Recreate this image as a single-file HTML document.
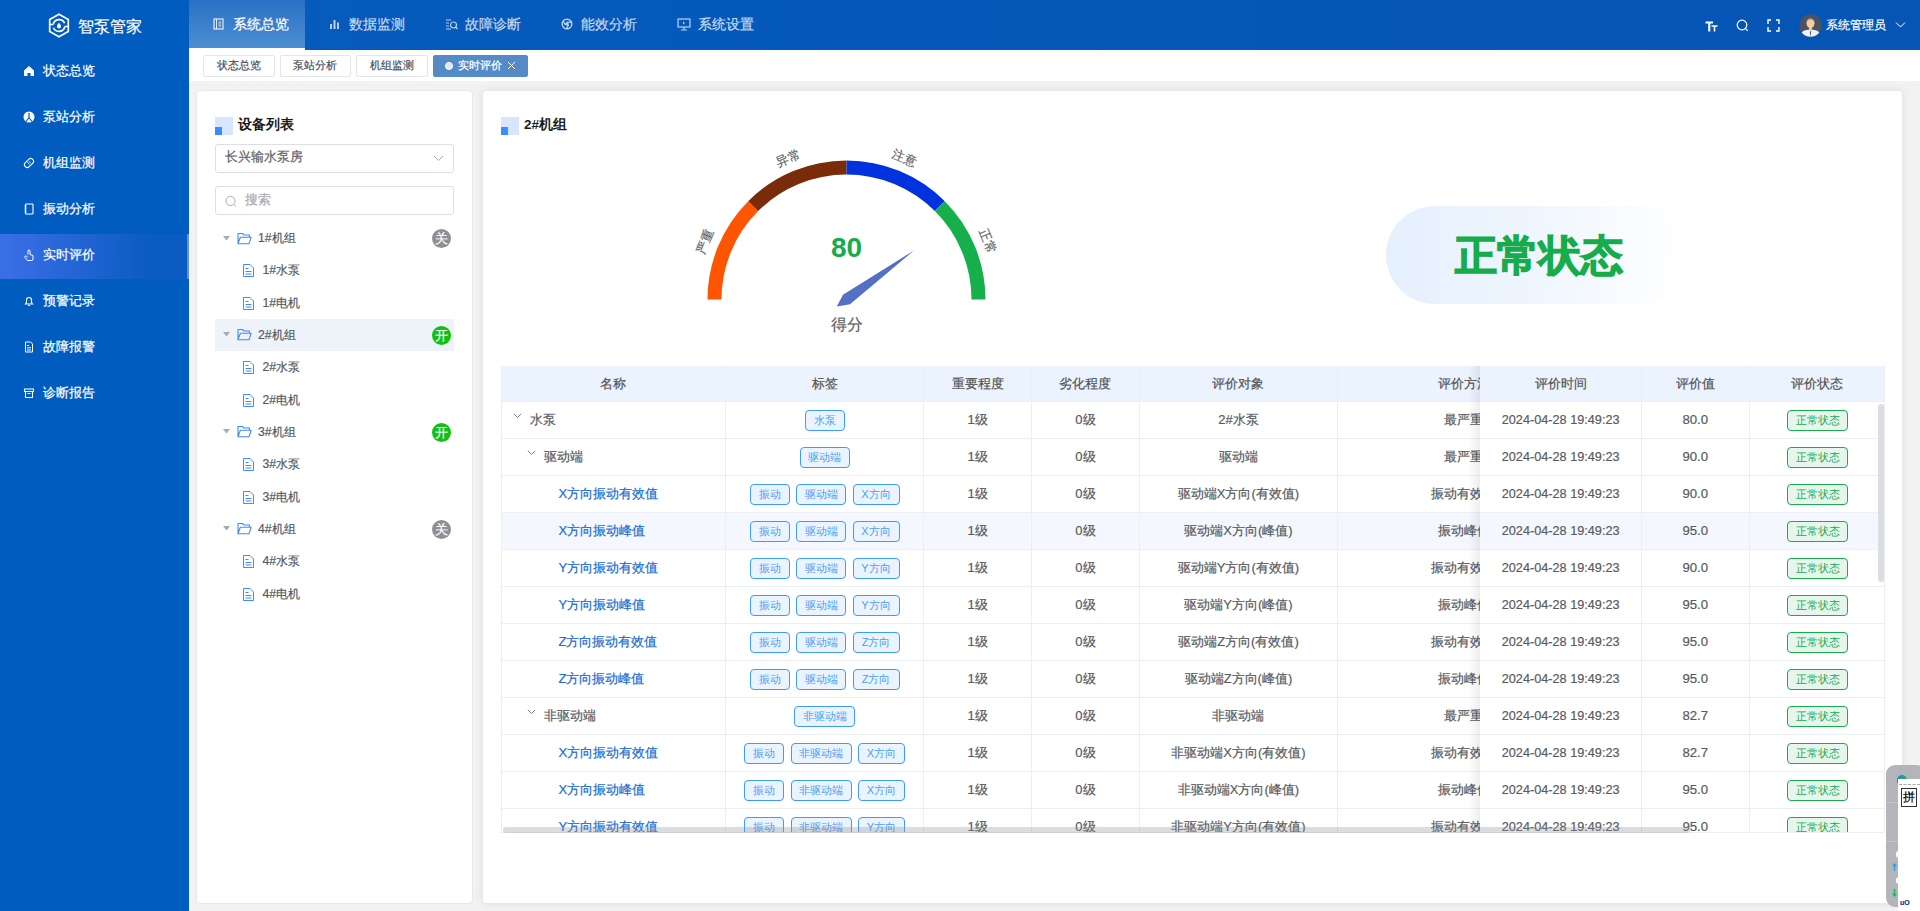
<!DOCTYPE html>
<html><head><meta charset="utf-8">
<style>
*{margin:0;padding:0;box-sizing:border-box}
html,body{width:1920px;height:911px;overflow:hidden;font-family:"Liberation Sans",sans-serif;background:#f4f5f7;-webkit-text-stroke-width:0.2px}
.abs{position:absolute}
#side{position:absolute;left:0;top:0;width:189px;height:911px;background:#005cbf}
#hdr{position:absolute;left:189px;top:0;width:1731px;height:50px;background:linear-gradient(90deg,#065bbd,#0555b4)}
.logo-t{position:absolute;left:77.5px;top:14.5px;font-size:16px;color:#fff;line-height:24px;letter-spacing:0}
.mi{position:absolute;left:0;width:189px;height:46px}
.mi .t{position:absolute;left:43px;top:0;line-height:46px;font-size:13px;color:#fff}
.mi svg{position:absolute;left:23px;top:17px}
.nav{position:absolute;top:0;height:48px;width:116px}
.nav .t{position:absolute;left:44px;top:1px;line-height:48px;font-size:13.5px;color:rgba(255,255,255,.72)}
.nav svg{position:absolute;left:24px;top:18px}
#tabs{position:absolute;left:189px;top:50px;width:1731px;height:31px;background:#fff}
.tag{position:absolute;top:54.5px;height:22px;border:1px solid #e4e6ee;border-radius:2px;background:#fff;font-size:11px;color:#495060;line-height:19px;text-align:center}
.card{position:absolute;background:#fff;border:1px solid #e6e8ef;border-radius:4px}
</style></head><body>
<div id="side">
  <svg class="abs" style="left:48px;top:13px" width="22" height="25" viewBox="0 0 22 25">
    <path d="M11 1.2 L20.3 6.6 V18.4 L11 23.8 L1.7 18.4 V6.6 Z" fill="none" stroke="#fff" stroke-width="1.7"/>
    <path d="M5.2 11.5 A6 6 0 0 1 16.6 10.2" fill="none" stroke="#fff" stroke-width="1.6"/>
    <path d="M16.8 13.5 A6 6 0 0 1 5.4 14.8" fill="none" stroke="#fff" stroke-width="1.6"/>
    <path d="M1.7 11.5 H5.2 M16.8 13.5 H20.3" stroke="#fff" stroke-width="1.6"/>
    <path d="M11 9.8 C12.5 11.6 13 12.4 13 13.4 A2 2 0 0 1 9 13.4 C9 12.4 9.5 11.6 11 9.8Z" fill="#fff"/>
  </svg>
  <div class="logo-t">智泵管家</div>
  <div class="mi" style="top:48px"><svg width="12" height="12" viewBox="0 0 12 12"><path d="M6 1 L11 5.5 V11 H7.5 V8 H4.5 V11 H1 V5.5Z" fill="#fff"/></svg><div class="t">状态总览</div></div>
  <div class="mi" style="top:94px"><svg width="12" height="12" viewBox="0 0 12 12"><circle cx="6" cy="6" r="5.5" fill="#fff"/><path d="M6 2 V6.5 L3 10.5 M6 6.5 L9 10.5" stroke="#005cbf" stroke-width="1.2" fill="none"/></svg><div class="t">泵站分析</div></div>
  <div class="mi" style="top:140px"><svg width="12" height="12" viewBox="0 0 12 12"><rect x="3.2" y="0.8" width="5.6" height="10.4" rx="2.8" transform="rotate(45 6 6)" fill="none" stroke="#fff" stroke-width="1.1"/><path d="M4.5 5.5 L6.5 7.5 M5.8 4.2 L7.8 6.2" stroke="#fff" stroke-width="1"/></svg><div class="t">机组监测</div></div>
  <div class="mi" style="top:186px"><svg width="12" height="12" viewBox="0 0 12 12"><rect x="2.5" y="1" width="7.5" height="10" rx="0.8" fill="none" stroke="#fff" stroke-width="1.1"/><path d="M1.5 3 H3.5 M1.5 5 H3.5 M1.5 7 H3.5 M1.5 9 H3.5" stroke="#fff" stroke-width="0.9"/></svg><div class="t">振动分析</div></div>
  <div class="abs" style="left:0;top:233.5px;width:187px;height:45.5px;background:linear-gradient(90deg,#3c6fe6,#0a5cc2 80%)"></div><div class="mi" style="top:232px"><svg width="12" height="12" viewBox="0 0 12 12"><path d="M5 5.5 V2 A1 1 0 0 1 7 2 V5.5 L10 6.5 V10 A1.5 1.5 0 0 1 8.5 11.5 H4.5 L2 8.5 A1 1 0 0 1 4 7.5 L5 8.5" fill="none" stroke="#fff" stroke-width="1"/></svg><div class="t">实时评价</div></div>
  <div class="abs" style="left:187px;top:234px;width:1.6px;height:45px;background:rgba(170,195,230,.55)"></div>
  <div class="mi" style="top:278px"><svg width="12" height="12" viewBox="0 0 12 12"><path d="M2.5 9 H9.5 L8.5 7.5 V5 A2.5 2.5 0 0 0 3.5 5 V7.5Z M5 10.5 H7" fill="none" stroke="#fff" stroke-width="1.1"/></svg><div class="t">预警记录</div></div>
  <div class="mi" style="top:324px"><svg width="12" height="12" viewBox="0 0 12 12"><path d="M2.5 1 H7.5 L9.5 3 V11 H2.5Z M4 4.5 H6 M4 6.8 H8 M4 9 H8" fill="none" stroke="#fff" stroke-width="1"/></svg><div class="t">故障报警</div></div>
  <div class="mi" style="top:370px"><svg width="12" height="12" viewBox="0 0 12 12"><path d="M1.5 2 H10.5 V4.5 H1.5Z M2.5 4.5 V10.5 H9.5 V4.5 M4.5 6.5 H7.5" fill="none" stroke="#fff" stroke-width="1.1"/></svg><div class="t">诊断报告</div></div>
</div>

<div id="hdr">
  <div class="nav" style="left:0;background:linear-gradient(180deg,#2a70c4,#4d8ed2)">
    <svg width="11" height="12" viewBox="0 0 11 12"><rect x="1" y="1" width="9" height="10" fill="none" stroke="#fff" stroke-width="1.2" opacity=".85"/><path d="M3.5 1 V11 M5.5 4 H8 M5.5 6 H8 M5.5 8 H8" stroke="#fff" stroke-width="1" opacity=".85"/></svg>
    <div class="t" style="color:#fff">系统总览</div></div>
  <div class="nav" style="left:116px">
    <svg width="11" height="12" viewBox="0 0 11 12"><path d="M2 6 V11 M5.5 2 V11 M9 4.5 V11" stroke="rgba(255,255,255,.72)" stroke-width="2"/></svg>
    <div class="t" style="left:43.5px">数据监测</div></div>
  <div class="nav" style="left:232px">
    <svg width="13" height="12" viewBox="0 0 13 12"><path d="M1 2 H6 M1 5 H4 M1 8 H4 M1 11 H6" stroke="rgba(255,255,255,.72)" stroke-width="1.2"/><circle cx="8.5" cy="7" r="3" fill="none" stroke="rgba(255,255,255,.72)" stroke-width="1.2"/><path d="M10.5 9 L12.5 11" stroke="rgba(255,255,255,.72)" stroke-width="1.2"/></svg>
    <div class="t">故障诊断</div></div>
  <div class="nav" style="left:348px">
    <svg width="12" height="12" viewBox="0 0 12 12"><circle cx="6" cy="6" r="4.8" fill="none" stroke="rgba(255,255,255,.72)" stroke-width="1.4"/><circle cx="6" cy="6" r="1.8" fill="rgba(255,255,255,.72)"/><path d="M6 4.2 H10.6 M4.4 6.9 L2.1 3 M7.6 6.9 L5.3 10.8" stroke="rgba(255,255,255,.72)" stroke-width="1.2"/></svg>
    <div class="t">能效分析</div></div>
  <div class="nav" style="left:464px">
    <svg width="14" height="13" viewBox="0 0 14 13"><rect x="1" y="1" width="12" height="8" fill="none" stroke="rgba(255,255,255,.72)" stroke-width="1.2"/><path d="M7 9 V12 M4 12 H10" stroke="rgba(255,255,255,.72)" stroke-width="1.2"/><path d="M6 3.5 L8 5 L6 6.5Z" fill="rgba(255,255,255,.72)"/></svg>
    <div class="t" style="left:45px">系统设置</div></div>

  <!-- right tools -->
  <svg class="abs" style="left:1516px;top:21px" width="13" height="11" viewBox="0 0 13 11"><path d="M0.5 0.5 H8 V2.5 H5.3 V10.5 H3.2 V2.5 H0.5Z M6.5 4.2 H12.5 V5.8 H10.3 V10.5 H8.7 V5.8 H6.5Z" fill="#fff"/></svg>
  <svg class="abs" style="left:1547px;top:19px" width="13" height="13" viewBox="0 0 13 13"><circle cx="6" cy="6" r="4.8" fill="none" stroke="#fff" stroke-width="1.2"/><path d="M9.5 9.5 L11.8 11.8" stroke="#fff" stroke-width="1.2"/></svg>
  <svg class="abs" style="left:1578px;top:19px" width="13" height="13" viewBox="0 0 13 13"><path d="M1 5 V1 H4 M9 1 H12 V5 M12 8 V12 H9 M4 12 H1 V8" fill="none" stroke="#fff" stroke-width="1.4"/></svg>
  <svg class="abs" style="left:1610px;top:14px" width="23" height="23" viewBox="0 0 23 23"><defs><clipPath id="av"><circle cx="11.5" cy="11.5" r="11.2"/></clipPath></defs><circle cx="11.5" cy="11.5" r="11.2" fill="#4b5262"/><g clip-path="url(#av)"><path d="M0.5 24 C1 17.5 5 15.8 11.5 15.8 C18 15.8 22 17.5 22.5 24Z" fill="#eef2f4"/><path d="M9.5 15.8 L11.5 18 L13.5 15.8Z" fill="#d8dde2"/><path d="M10.8 17.5 L11.5 23 L12.2 17.5Z" fill="#475060"/><rect x="10" y="12" width="3" height="4" fill="#f0c190"/><ellipse cx="11.5" cy="9.3" rx="4" ry="4.8" fill="#f7cd9c"/><path d="M7.3 8.5 C7 3.5 16 3.5 15.7 8.5 C15 6.3 13.5 5.8 11.5 5.8 C9.5 5.8 8 6.3 7.3 8.5Z" fill="#8c969c"/></g></svg>
  <div class="abs" style="left:1637px;top:14.5px;font-size:12.3px;color:#fff;line-height:20px">系统管理员</div>
  <svg class="abs" style="left:1706px;top:21px" width="11" height="8" viewBox="0 0 11 8"><path d="M1 1.5 L5.5 6 L10 1.5" fill="none" stroke="#fff" stroke-width="1"/></svg>
</div>

<div id="tabs"></div><div class="abs" style="left:189px;top:48px;width:116px;height:2px;background:#fff"></div>
<div class="tag" style="left:203px;width:71.5px">状态总览</div>
<div class="tag" style="left:279.5px;width:71.5px">泵站分析</div>
<div class="tag" style="left:356px;width:71.5px">机组监测</div>
<div class="tag" style="left:433px;width:95px;background:#548ac5;border-color:#548ac5;color:#fff;text-align:left;padding-left:24px">
  <span class="abs" style="left:11px;top:6px;width:8px;height:8px;border-radius:50%;background:#dfe8f3;border:1.5px solid #fff"></span>实时评价
  <svg class="abs" style="left:72.8px;top:5.5px" width="9" height="9" viewBox="0 0 9 9"><path d="M1 1 L8 8 M8 1 L1 8" stroke="#fff" stroke-width="1"/></svg>
</div>

<!-- content bg -->
<div class="abs" style="left:189px;top:81px;width:1731px;height:830px;background:#f2f2f3"></div>

<!-- LEFT CARD -->
<div class="card" style="left:196px;top:89.5px;width:277px;height:814px"></div>
<div id="leftc">
<div class="abs" style="left:215px;top:117px;width:18px;height:18px;background:#d7e6fd"></div>
<div class="abs" style="left:215px;top:127px;width:7px;height:8px;background:#3c8cfc"></div>
<div class="abs" style="left:238px;top:115px;font-size:13.5px;font-weight:bold;color:#1b1b1b;line-height:20px;-webkit-text-stroke-width:0">设备列表</div>
<div class="abs" style="left:215px;top:144px;width:239px;height:29px;border:1px solid #dcdfe6;border-radius:3px"></div>
<div class="abs" style="left:225px;top:147px;font-size:12.8px;color:#606266;line-height:20px">长兴输水泵房</div>
<svg class="abs" style="left:433px;top:155px" width="11" height="7" viewBox="0 0 11 7"><path d="M1 1 L5.5 5.5 L10 1" fill="none" stroke="#a8abb2" stroke-width="1"/></svg>
<div class="abs" style="left:215px;top:186px;width:239px;height:29px;border:1px solid #dcdfe6;border-radius:3px"></div>
<svg class="abs" style="left:225px;top:195px" width="12" height="13" viewBox="0 0 12 13"><circle cx="5.5" cy="6" r="4.6" fill="none" stroke="#a8abb2" stroke-width="1"/><path d="M9 9.5 L11 11.5" stroke="#a8abb2" stroke-width="1"/></svg>
<div class="abs" style="left:245px;top:190px;font-size:12.5px;color:#a8abb2;line-height:20px">搜索</div>
<div class="abs" style="left:215px;top:318.8px;width:239px;height:32.33px;background:#eef3fa"></div>
<svg class="abs" style="left:223px;top:235.50px" width="7" height="5" viewBox="0 0 7 5"><path d="M0 0 H7 L3.5 4.5Z" fill="#a8abb2"/></svg><svg class="abs" style="left:237px;top:232px" width="15" height="13" viewBox="0 0 15 13"><path d="M1 11.8 V1.5 H5.5 L7 3 H12.5 V5 M1 11.8 L3.3 5.2 H14.2 L12 11.8Z" fill="none" stroke="#3d8bfd" stroke-width="1.1" stroke-linejoin="round"/></svg><div class="abs" style="left:258px;top:228.00px;font-size:12.2px;color:#555a63;line-height:20px">1#机组</div><div class="abs" style="left:431.5px;top:228.70px;width:19px;height:19px;border-radius:50%;background:#8e9094;color:#fff;font-size:13px;line-height:19px;text-align:center">关</div><svg class="abs" style="left:242px;top:263px" width="13" height="14" viewBox="0 0 13 14"><path d="M1.5 1.5 H8 L11.5 5 V13.5 H1.5Z M3.5 5.5 H6.5 M3.5 8.5 H9.5 M3.5 11 H9.5" fill="none" stroke="#3d8bfd" stroke-width="1" stroke-linejoin="round"/></svg><div class="abs" style="left:262.5px;top:260.33px;font-size:12.2px;color:#555a63;line-height:20px">1#水泵</div><svg class="abs" style="left:242px;top:296px" width="13" height="14" viewBox="0 0 13 14"><path d="M1.5 1.5 H8 L11.5 5 V13.5 H1.5Z M3.5 5.5 H6.5 M3.5 8.5 H9.5 M3.5 11 H9.5" fill="none" stroke="#3d8bfd" stroke-width="1" stroke-linejoin="round"/></svg><div class="abs" style="left:262.5px;top:292.66px;font-size:12.2px;color:#555a63;line-height:20px">1#电机</div><svg class="abs" style="left:223px;top:332.49px" width="7" height="5" viewBox="0 0 7 5"><path d="M0 0 H7 L3.5 4.5Z" fill="#a8abb2"/></svg><svg class="abs" style="left:237px;top:328px" width="15" height="13" viewBox="0 0 15 13"><path d="M1 11.8 V1.5 H5.5 L7 3 H12.5 V5 M1 11.8 L3.3 5.2 H14.2 L12 11.8Z" fill="none" stroke="#3d8bfd" stroke-width="1.1" stroke-linejoin="round"/></svg><div class="abs" style="left:258px;top:324.99px;font-size:12.2px;color:#555a63;line-height:20px">2#机组</div><div class="abs" style="left:431.5px;top:325.69px;width:19px;height:19px;border-radius:50%;background:#10c110;color:#fff;font-size:13px;line-height:19px;text-align:center">开</div><svg class="abs" style="left:242px;top:360px" width="13" height="14" viewBox="0 0 13 14"><path d="M1.5 1.5 H8 L11.5 5 V13.5 H1.5Z M3.5 5.5 H6.5 M3.5 8.5 H9.5 M3.5 11 H9.5" fill="none" stroke="#3d8bfd" stroke-width="1" stroke-linejoin="round"/></svg><div class="abs" style="left:262.5px;top:357.32px;font-size:12.2px;color:#555a63;line-height:20px">2#水泵</div><svg class="abs" style="left:242px;top:393px" width="13" height="14" viewBox="0 0 13 14"><path d="M1.5 1.5 H8 L11.5 5 V13.5 H1.5Z M3.5 5.5 H6.5 M3.5 8.5 H9.5 M3.5 11 H9.5" fill="none" stroke="#3d8bfd" stroke-width="1" stroke-linejoin="round"/></svg><div class="abs" style="left:262.5px;top:389.65px;font-size:12.2px;color:#555a63;line-height:20px">2#电机</div><svg class="abs" style="left:223px;top:429.48px" width="7" height="5" viewBox="0 0 7 5"><path d="M0 0 H7 L3.5 4.5Z" fill="#a8abb2"/></svg><svg class="abs" style="left:237px;top:425px" width="15" height="13" viewBox="0 0 15 13"><path d="M1 11.8 V1.5 H5.5 L7 3 H12.5 V5 M1 11.8 L3.3 5.2 H14.2 L12 11.8Z" fill="none" stroke="#3d8bfd" stroke-width="1.1" stroke-linejoin="round"/></svg><div class="abs" style="left:258px;top:421.98px;font-size:12.2px;color:#555a63;line-height:20px">3#机组</div><div class="abs" style="left:431.5px;top:422.68px;width:19px;height:19px;border-radius:50%;background:#10c110;color:#fff;font-size:13px;line-height:19px;text-align:center">开</div><svg class="abs" style="left:242px;top:457px" width="13" height="14" viewBox="0 0 13 14"><path d="M1.5 1.5 H8 L11.5 5 V13.5 H1.5Z M3.5 5.5 H6.5 M3.5 8.5 H9.5 M3.5 11 H9.5" fill="none" stroke="#3d8bfd" stroke-width="1" stroke-linejoin="round"/></svg><div class="abs" style="left:262.5px;top:454.31px;font-size:12.2px;color:#555a63;line-height:20px">3#水泵</div><svg class="abs" style="left:242px;top:490px" width="13" height="14" viewBox="0 0 13 14"><path d="M1.5 1.5 H8 L11.5 5 V13.5 H1.5Z M3.5 5.5 H6.5 M3.5 8.5 H9.5 M3.5 11 H9.5" fill="none" stroke="#3d8bfd" stroke-width="1" stroke-linejoin="round"/></svg><div class="abs" style="left:262.5px;top:486.64px;font-size:12.2px;color:#555a63;line-height:20px">3#电机</div><svg class="abs" style="left:223px;top:526.47px" width="7" height="5" viewBox="0 0 7 5"><path d="M0 0 H7 L3.5 4.5Z" fill="#a8abb2"/></svg><svg class="abs" style="left:237px;top:522px" width="15" height="13" viewBox="0 0 15 13"><path d="M1 11.8 V1.5 H5.5 L7 3 H12.5 V5 M1 11.8 L3.3 5.2 H14.2 L12 11.8Z" fill="none" stroke="#3d8bfd" stroke-width="1.1" stroke-linejoin="round"/></svg><div class="abs" style="left:258px;top:518.97px;font-size:12.2px;color:#555a63;line-height:20px">4#机组</div><div class="abs" style="left:431.5px;top:519.67px;width:19px;height:19px;border-radius:50%;background:#8e9094;color:#fff;font-size:13px;line-height:19px;text-align:center">关</div><svg class="abs" style="left:242px;top:554px" width="13" height="14" viewBox="0 0 13 14"><path d="M1.5 1.5 H8 L11.5 5 V13.5 H1.5Z M3.5 5.5 H6.5 M3.5 8.5 H9.5 M3.5 11 H9.5" fill="none" stroke="#3d8bfd" stroke-width="1" stroke-linejoin="round"/></svg><div class="abs" style="left:262.5px;top:551.30px;font-size:12.2px;color:#555a63;line-height:20px">4#水泵</div><svg class="abs" style="left:242px;top:587px" width="13" height="14" viewBox="0 0 13 14"><path d="M1.5 1.5 H8 L11.5 5 V13.5 H1.5Z M3.5 5.5 H6.5 M3.5 8.5 H9.5 M3.5 11 H9.5" fill="none" stroke="#3d8bfd" stroke-width="1" stroke-linejoin="round"/></svg><div class="abs" style="left:262.5px;top:583.63px;font-size:12.2px;color:#555a63;line-height:20px">4#电机</div>
</div>

<!-- RIGHT CARD -->
<div class="card" style="left:481.8px;top:89.5px;width:1421.5px;height:814px;border-color:#e6e8ee;box-shadow:0 0 8px rgba(0,0,0,.07)"></div>
<div id="rightc"><div class="abs" style="left:501px;top:117px;width:18px;height:18px;background:#d7e6fd"></div><div class="abs" style="left:501px;top:127px;width:7px;height:8px;background:#3c8cfc"></div><div class="abs" style="left:524px;top:115px;font-size:13.5px;font-weight:bold;color:#1b1b1b;line-height:20px;-webkit-text-stroke-width:0">2#机组</div><svg class="abs" style="left:0;top:0" width="1920" height="911" viewBox="0 0 1920 911"><path d="M714.50 299.50 A132 132 0 0 1 753.16 206.16" fill="none" stroke="#ff5500" stroke-width="14"/><path d="M753.16 206.16 A132 132 0 0 1 846.50 167.50" fill="none" stroke="#7a2b09" stroke-width="14"/><path d="M846.50 167.50 A132 132 0 0 1 939.84 206.16" fill="none" stroke="#0033dd" stroke-width="14"/><path d="M939.84 206.16 A132 132 0 0 1 978.50 299.50" fill="none" stroke="#15b04c" stroke-width="14"/><path d="M836.79 306.55 L850.03 304.35 L913.97 250.48 L842.97 294.65Z" fill="#5470c6"/></svg><div class="abs" style="left:685.15px;top:230.95px;width:40px;height:20px;line-height:20px;text-align:center;font-size:12.5px;color:#62646b;transform:rotate(-67.5deg)">严重</div><div class="abs" style="left:767.95px;top:148.15px;width:40px;height:20px;line-height:20px;text-align:center;font-size:12.5px;color:#62646b;transform:rotate(-22.5deg)">异常</div><div class="abs" style="left:885.05px;top:148.15px;width:40px;height:20px;line-height:20px;text-align:center;font-size:12.5px;color:#62646b;transform:rotate(22.5deg)">注意</div><div class="abs" style="left:967.85px;top:230.95px;width:40px;height:20px;line-height:20px;text-align:center;font-size:12.5px;color:#62646b;transform:rotate(67.5deg)">正常</div><div class="abs" style="left:806.5px;top:230px;width:80px;text-align:center;font-size:28px;font-weight:bold;color:#17ab4a;line-height:36px;-webkit-text-stroke-width:0">80</div><div class="abs" style="left:806.5px;top:314px;width:80px;text-align:center;font-size:16px;color:#666;line-height:22px">得分</div><div class="abs" style="left:1385.5px;top:206px;width:302px;height:98px;border-radius:49px;background:linear-gradient(90deg,#e5f0fd 0%,#eef5fe 45%,#ffffff 100%)"></div><div class="abs" style="left:1454.5px;top:227px;font-size:42px;font-weight:bold;color:#17ac4b;line-height:58px;-webkit-text-stroke:1.3px #17ac4b;letter-spacing:0">正常状态</div><div id="tbl"><style>.td{position:absolute;margin-top:.8px;font-size:13px;color:#585b61;line-height:20px;white-space:nowrap}.tg{position:absolute;height:21px;margin-top:1px;border:1.3px solid #3d9bff;border-radius:4px;background:#eaf4ff;color:#4a9cf5;font-size:11px;line-height:18.4px;text-align:center;-webkit-text-stroke-width:0}.st{position:absolute;height:21px;margin-top:1px;border:1.3px solid #19ac4a;border-radius:4px;background:#e7f6ec;color:#22a94f;font-size:11px;line-height:18.4px;text-align:center;-webkit-text-stroke-width:0}</style><div class="abs" style="left:501px;top:366.2px;width:1383.7px;height:466.8px;overflow:hidden"><div class="abs" style="left:0;top:0;width:1383.7px;height:35.7px;background:#eaf3fe"></div><div class="abs" style="left:0;top:147.00px;width:1383.7px;height:36px;background:#f4f8fe"></div><div class="abs" style="left:0;top:34.7px;width:1383.7px;height:1px;background:#ebeef5"></div><div class="abs" style="left:0;top:71.70px;width:1383.7px;height:1px;background:#ebeef5"></div><div class="abs" style="left:0;top:108.70px;width:1383.7px;height:1px;background:#ebeef5"></div><div class="abs" style="left:0;top:145.70px;width:1383.7px;height:1px;background:#ebeef5"></div><div class="abs" style="left:0;top:182.70px;width:1383.7px;height:1px;background:#ebeef5"></div><div class="abs" style="left:0;top:219.70px;width:1383.7px;height:1px;background:#ebeef5"></div><div class="abs" style="left:0;top:256.70px;width:1383.7px;height:1px;background:#ebeef5"></div><div class="abs" style="left:0;top:293.70px;width:1383.7px;height:1px;background:#ebeef5"></div><div class="abs" style="left:0;top:330.70px;width:1383.7px;height:1px;background:#ebeef5"></div><div class="abs" style="left:0;top:367.70px;width:1383.7px;height:1px;background:#ebeef5"></div><div class="abs" style="left:0;top:404.70px;width:1383.7px;height:1px;background:#ebeef5"></div><div class="abs" style="left:0;top:441.70px;width:1383.7px;height:1px;background:#ebeef5"></div><div class="abs" style="left:0;top:478.70px;width:1383.7px;height:1px;background:#ebeef5"></div><div class="abs" style="left:224.00px;top:0;width:1px;height:500px;background:#ebeef5"></div><div class="abs" style="left:422.00px;top:0;width:1px;height:500px;background:#ebeef5"></div><div class="abs" style="left:530.00px;top:0;width:1px;height:500px;background:#ebeef5"></div><div class="abs" style="left:637.80px;top:0;width:1px;height:500px;background:#ebeef5"></div><div class="abs" style="left:836.10px;top:0;width:1px;height:500px;background:#ebeef5"></div><div class="abs" style="left:1088.90px;top:0;width:1px;height:500px;background:#ebeef5"></div><div class="abs" style="left:0;top:0;width:1px;height:500px;background:#ebeef5"></div><div class="td" style="left:0.00px;top:6.8px;width:224.50px;text-align:center;color:#555">名称</div><div class="td" style="left:224.50px;top:6.8px;width:198.00px;text-align:center;color:#555">标签</div><div class="td" style="left:422.50px;top:6.8px;width:108.00px;text-align:center;color:#555">重要程度</div><div class="td" style="left:530.50px;top:6.8px;width:107.80px;text-align:center;color:#555">劣化程度</div><div class="td" style="left:638.30px;top:6.8px;width:198.30px;text-align:center;color:#555">评价对象</div><div class="td" style="left:836.60px;top:6.8px;width:252.80px;text-align:center;color:#555">评价方法</div><svg class="abs" style="left:12.30px;top:46.90px" width="9" height="6" viewBox="0 0 9 6"><path d="M0.8 0.8 L4.5 4.5 L8.2 0.8" fill="none" stroke="#7d7f85" stroke-width="1"/></svg><div class="td" style="left:29.00px;top:43.20px">水泵</div><div class="tg" style="left:303.50px;top:43.20px;width:40px">水泵</div><div class="td" style="left:422.50px;top:43.20px;width:108px;text-align:center">1级</div><div class="td" style="left:530.50px;top:43.20px;width:107.8px;text-align:center">0级</div><div class="td" style="left:638.30px;top:43.20px;width:198.30px;text-align:center">2#水泵</div><div class="td" style="left:836.60px;top:43.20px;width:252.80px;text-align:center">最严重</div><svg class="abs" style="left:26.30px;top:83.90px" width="9" height="6" viewBox="0 0 9 6"><path d="M0.8 0.8 L4.5 4.5 L8.2 0.8" fill="none" stroke="#7d7f85" stroke-width="1"/></svg><div class="td" style="left:43.00px;top:80.20px">驱动端</div><div class="tg" style="left:298.50px;top:80.20px;width:50px">驱动端</div><div class="td" style="left:422.50px;top:80.20px;width:108px;text-align:center">1级</div><div class="td" style="left:530.50px;top:80.20px;width:107.8px;text-align:center">0级</div><div class="td" style="left:638.30px;top:80.20px;width:198.30px;text-align:center">驱动端</div><div class="td" style="left:836.60px;top:80.20px;width:252.80px;text-align:center">最严重</div><div class="td" style="left:57.50px;top:117.20px;color:#1a6dd1">X方向振动有效值</div><div class="tg" style="left:248.50px;top:117.20px;width:40px">振动</div><div class="tg" style="left:295.00px;top:117.20px;width:50px">驱动端</div><div class="tg" style="left:351.50px;top:117.20px;width:47px">X方向</div><div class="td" style="left:422.50px;top:117.20px;width:108px;text-align:center">1级</div><div class="td" style="left:530.50px;top:117.20px;width:107.8px;text-align:center">0级</div><div class="td" style="left:638.30px;top:117.20px;width:198.30px;text-align:center">驱动端X方向(有效值)</div><div class="td" style="left:836.60px;top:117.20px;width:252.80px;text-align:center">振动有效值</div><div class="td" style="left:57.50px;top:154.20px;color:#1a6dd1">X方向振动峰值</div><div class="tg" style="left:248.50px;top:154.20px;width:40px">振动</div><div class="tg" style="left:295.00px;top:154.20px;width:50px">驱动端</div><div class="tg" style="left:351.50px;top:154.20px;width:47px">X方向</div><div class="td" style="left:422.50px;top:154.20px;width:108px;text-align:center">1级</div><div class="td" style="left:530.50px;top:154.20px;width:107.8px;text-align:center">0级</div><div class="td" style="left:638.30px;top:154.20px;width:198.30px;text-align:center">驱动端X方向(峰值)</div><div class="td" style="left:836.60px;top:154.20px;width:252.80px;text-align:center">振动峰值</div><div class="td" style="left:57.50px;top:191.20px;color:#1a6dd1">Y方向振动有效值</div><div class="tg" style="left:248.50px;top:191.20px;width:40px">振动</div><div class="tg" style="left:295.00px;top:191.20px;width:50px">驱动端</div><div class="tg" style="left:351.50px;top:191.20px;width:47px">Y方向</div><div class="td" style="left:422.50px;top:191.20px;width:108px;text-align:center">1级</div><div class="td" style="left:530.50px;top:191.20px;width:107.8px;text-align:center">0级</div><div class="td" style="left:638.30px;top:191.20px;width:198.30px;text-align:center">驱动端Y方向(有效值)</div><div class="td" style="left:836.60px;top:191.20px;width:252.80px;text-align:center">振动有效值</div><div class="td" style="left:57.50px;top:228.20px;color:#1a6dd1">Y方向振动峰值</div><div class="tg" style="left:248.50px;top:228.20px;width:40px">振动</div><div class="tg" style="left:295.00px;top:228.20px;width:50px">驱动端</div><div class="tg" style="left:351.50px;top:228.20px;width:47px">Y方向</div><div class="td" style="left:422.50px;top:228.20px;width:108px;text-align:center">1级</div><div class="td" style="left:530.50px;top:228.20px;width:107.8px;text-align:center">0级</div><div class="td" style="left:638.30px;top:228.20px;width:198.30px;text-align:center">驱动端Y方向(峰值)</div><div class="td" style="left:836.60px;top:228.20px;width:252.80px;text-align:center">振动峰值</div><div class="td" style="left:57.50px;top:265.20px;color:#1a6dd1">Z方向振动有效值</div><div class="tg" style="left:248.50px;top:265.20px;width:40px">振动</div><div class="tg" style="left:295.00px;top:265.20px;width:50px">驱动端</div><div class="tg" style="left:351.50px;top:265.20px;width:47px">Z方向</div><div class="td" style="left:422.50px;top:265.20px;width:108px;text-align:center">1级</div><div class="td" style="left:530.50px;top:265.20px;width:107.8px;text-align:center">0级</div><div class="td" style="left:638.30px;top:265.20px;width:198.30px;text-align:center">驱动端Z方向(有效值)</div><div class="td" style="left:836.60px;top:265.20px;width:252.80px;text-align:center">振动有效值</div><div class="td" style="left:57.50px;top:302.20px;color:#1a6dd1">Z方向振动峰值</div><div class="tg" style="left:248.50px;top:302.20px;width:40px">振动</div><div class="tg" style="left:295.00px;top:302.20px;width:50px">驱动端</div><div class="tg" style="left:351.50px;top:302.20px;width:47px">Z方向</div><div class="td" style="left:422.50px;top:302.20px;width:108px;text-align:center">1级</div><div class="td" style="left:530.50px;top:302.20px;width:107.8px;text-align:center">0级</div><div class="td" style="left:638.30px;top:302.20px;width:198.30px;text-align:center">驱动端Z方向(峰值)</div><div class="td" style="left:836.60px;top:302.20px;width:252.80px;text-align:center">振动峰值</div><svg class="abs" style="left:26.30px;top:342.90px" width="9" height="6" viewBox="0 0 9 6"><path d="M0.8 0.8 L4.5 4.5 L8.2 0.8" fill="none" stroke="#7d7f85" stroke-width="1"/></svg><div class="td" style="left:43.00px;top:339.20px">非驱动端</div><div class="tg" style="left:293.00px;top:339.20px;width:61px">非驱动端</div><div class="td" style="left:422.50px;top:339.20px;width:108px;text-align:center">1级</div><div class="td" style="left:530.50px;top:339.20px;width:107.8px;text-align:center">0级</div><div class="td" style="left:638.30px;top:339.20px;width:198.30px;text-align:center">非驱动端</div><div class="td" style="left:836.60px;top:339.20px;width:252.80px;text-align:center">最严重</div><div class="td" style="left:57.50px;top:376.20px;color:#1a6dd1">X方向振动有效值</div><div class="tg" style="left:243.00px;top:376.20px;width:40px">振动</div><div class="tg" style="left:289.50px;top:376.20px;width:61px">非驱动端</div><div class="tg" style="left:357.00px;top:376.20px;width:47px">X方向</div><div class="td" style="left:422.50px;top:376.20px;width:108px;text-align:center">1级</div><div class="td" style="left:530.50px;top:376.20px;width:107.8px;text-align:center">0级</div><div class="td" style="left:638.30px;top:376.20px;width:198.30px;text-align:center">非驱动端X方向(有效值)</div><div class="td" style="left:836.60px;top:376.20px;width:252.80px;text-align:center">振动有效值</div><div class="td" style="left:57.50px;top:413.20px;color:#1a6dd1">X方向振动峰值</div><div class="tg" style="left:243.00px;top:413.20px;width:40px">振动</div><div class="tg" style="left:289.50px;top:413.20px;width:61px">非驱动端</div><div class="tg" style="left:357.00px;top:413.20px;width:47px">X方向</div><div class="td" style="left:422.50px;top:413.20px;width:108px;text-align:center">1级</div><div class="td" style="left:530.50px;top:413.20px;width:107.8px;text-align:center">0级</div><div class="td" style="left:638.30px;top:413.20px;width:198.30px;text-align:center">非驱动端X方向(峰值)</div><div class="td" style="left:836.60px;top:413.20px;width:252.80px;text-align:center">振动峰值</div><div class="td" style="left:57.50px;top:450.20px;color:#1a6dd1">Y方向振动有效值</div><div class="tg" style="left:243.00px;top:450.20px;width:40px">振动</div><div class="tg" style="left:289.50px;top:450.20px;width:61px">非驱动端</div><div class="tg" style="left:357.00px;top:450.20px;width:47px">Y方向</div><div class="td" style="left:422.50px;top:450.20px;width:108px;text-align:center">1级</div><div class="td" style="left:530.50px;top:450.20px;width:107.8px;text-align:center">0级</div><div class="td" style="left:638.30px;top:450.20px;width:198.30px;text-align:center">非驱动端Y方向(有效值)</div><div class="td" style="left:836.60px;top:450.20px;width:252.80px;text-align:center">振动有效值</div><div class="abs" style="left:967px;top:0;width:12px;height:500px;background:linear-gradient(90deg,rgba(0,0,0,0),rgba(0,0,0,.07))"></div><div class="abs" style="left:979px;top:0;width:404.70000000000005px;height:500px;background:#fff"><div class="abs" style="left:0;top:0;width:404.70000000000005px;height:35.7px;background:#eaf3fe"></div><div class="abs" style="left:0;top:147.00px;width:404.70000000000005px;height:36px;background:#f4f8fe"></div><div class="abs" style="left:0;top:34.7px;width:404.70000000000005px;height:1px;background:#ebeef5"></div><div class="abs" style="left:0;top:71.70px;width:404.70000000000005px;height:1px;background:#ebeef5"></div><div class="abs" style="left:0;top:108.70px;width:404.70000000000005px;height:1px;background:#ebeef5"></div><div class="abs" style="left:0;top:145.70px;width:404.70000000000005px;height:1px;background:#ebeef5"></div><div class="abs" style="left:0;top:182.70px;width:404.70000000000005px;height:1px;background:#ebeef5"></div><div class="abs" style="left:0;top:219.70px;width:404.70000000000005px;height:1px;background:#ebeef5"></div><div class="abs" style="left:0;top:256.70px;width:404.70000000000005px;height:1px;background:#ebeef5"></div><div class="abs" style="left:0;top:293.70px;width:404.70000000000005px;height:1px;background:#ebeef5"></div><div class="abs" style="left:0;top:330.70px;width:404.70000000000005px;height:1px;background:#ebeef5"></div><div class="abs" style="left:0;top:367.70px;width:404.70000000000005px;height:1px;background:#ebeef5"></div><div class="abs" style="left:0;top:404.70px;width:404.70000000000005px;height:1px;background:#ebeef5"></div><div class="abs" style="left:0;top:441.70px;width:404.70000000000005px;height:1px;background:#ebeef5"></div><div class="abs" style="left:0;top:478.70px;width:404.70000000000005px;height:1px;background:#ebeef5"></div><div class="abs" style="left:160.80px;top:0;width:1px;height:500px;background:#ebeef5"></div><div class="abs" style="left:268.80px;top:0;width:1px;height:500px;background:#ebeef5"></div><div class="abs" style="left:404.20px;top:0;width:1px;height:500px;background:#ebeef5"></div><div class="td" style="left:0.00px;top:6.8px;width:161.30px;text-align:center;color:#555">评价时间</div><div class="td" style="left:161.30px;top:6.8px;width:108.00px;text-align:center;color:#555">评价值</div><div class="td" style="left:269.30px;top:6.8px;width:135.40px;text-align:center;color:#555">评价状态</div><div class="td" style="left:0;top:43.20px;width:161.30px;text-align:center;font-size:12.7px">2024-04-28 19:49:23</div><div class="td" style="left:161.30px;top:43.20px;width:108.00px;text-align:center;font-size:13.2px">80.0</div><div class="st" style="left:307.20px;top:43.20px;width:60.7px">正常状态</div><div class="td" style="left:0;top:80.20px;width:161.30px;text-align:center;font-size:12.7px">2024-04-28 19:49:23</div><div class="td" style="left:161.30px;top:80.20px;width:108.00px;text-align:center;font-size:13.2px">90.0</div><div class="st" style="left:307.20px;top:80.20px;width:60.7px">正常状态</div><div class="td" style="left:0;top:117.20px;width:161.30px;text-align:center;font-size:12.7px">2024-04-28 19:49:23</div><div class="td" style="left:161.30px;top:117.20px;width:108.00px;text-align:center;font-size:13.2px">90.0</div><div class="st" style="left:307.20px;top:117.20px;width:60.7px">正常状态</div><div class="td" style="left:0;top:154.20px;width:161.30px;text-align:center;font-size:12.7px">2024-04-28 19:49:23</div><div class="td" style="left:161.30px;top:154.20px;width:108.00px;text-align:center;font-size:13.2px">95.0</div><div class="st" style="left:307.20px;top:154.20px;width:60.7px">正常状态</div><div class="td" style="left:0;top:191.20px;width:161.30px;text-align:center;font-size:12.7px">2024-04-28 19:49:23</div><div class="td" style="left:161.30px;top:191.20px;width:108.00px;text-align:center;font-size:13.2px">90.0</div><div class="st" style="left:307.20px;top:191.20px;width:60.7px">正常状态</div><div class="td" style="left:0;top:228.20px;width:161.30px;text-align:center;font-size:12.7px">2024-04-28 19:49:23</div><div class="td" style="left:161.30px;top:228.20px;width:108.00px;text-align:center;font-size:13.2px">95.0</div><div class="st" style="left:307.20px;top:228.20px;width:60.7px">正常状态</div><div class="td" style="left:0;top:265.20px;width:161.30px;text-align:center;font-size:12.7px">2024-04-28 19:49:23</div><div class="td" style="left:161.30px;top:265.20px;width:108.00px;text-align:center;font-size:13.2px">95.0</div><div class="st" style="left:307.20px;top:265.20px;width:60.7px">正常状态</div><div class="td" style="left:0;top:302.20px;width:161.30px;text-align:center;font-size:12.7px">2024-04-28 19:49:23</div><div class="td" style="left:161.30px;top:302.20px;width:108.00px;text-align:center;font-size:13.2px">95.0</div><div class="st" style="left:307.20px;top:302.20px;width:60.7px">正常状态</div><div class="td" style="left:0;top:339.20px;width:161.30px;text-align:center;font-size:12.7px">2024-04-28 19:49:23</div><div class="td" style="left:161.30px;top:339.20px;width:108.00px;text-align:center;font-size:13.2px">82.7</div><div class="st" style="left:307.20px;top:339.20px;width:60.7px">正常状态</div><div class="td" style="left:0;top:376.20px;width:161.30px;text-align:center;font-size:12.7px">2024-04-28 19:49:23</div><div class="td" style="left:161.30px;top:376.20px;width:108.00px;text-align:center;font-size:13.2px">82.7</div><div class="st" style="left:307.20px;top:376.20px;width:60.7px">正常状态</div><div class="td" style="left:0;top:413.20px;width:161.30px;text-align:center;font-size:12.7px">2024-04-28 19:49:23</div><div class="td" style="left:161.30px;top:413.20px;width:108.00px;text-align:center;font-size:13.2px">95.0</div><div class="st" style="left:307.20px;top:413.20px;width:60.7px">正常状态</div><div class="td" style="left:0;top:450.20px;width:161.30px;text-align:center;font-size:12.7px">2024-04-28 19:49:23</div><div class="td" style="left:161.30px;top:450.20px;width:108.00px;text-align:center;font-size:13.2px">95.0</div><div class="st" style="left:307.20px;top:450.20px;width:60.7px">正常状态</div></div><div class="abs" style="left:1377px;top:37.80px;width:5.5px;height:178px;border-radius:3px;background:#dcdde0"></div><div class="abs" style="left:0;top:465.8px;width:1383.7px;height:1px;background:#ebeef5"></div><div class="abs" style="left:2px;top:460.80px;width:1187px;height:6px;border-radius:3px;background:rgba(144,147,153,.32)"></div></div></div></div>

<div class="abs" style="left:1886px;top:765px;width:40px;height:142px;border-radius:9px;background:#b3b5ba"></div>
<div class="abs" style="left:1897px;top:775px;width:10px;height:8px;border-radius:5px 5px 0 0;background:linear-gradient(90deg,#2b7be8,#22b35a)"></div>
<div class="abs" style="left:1898px;top:779px;width:22px;height:132px;background:#fff"></div>
<div class="abs" style="left:1899px;top:783.5px;width:21px;border-top:1px dashed #aaa"></div>
<div class="abs" style="left:1901px;top:787.5px;width:16px;height:19px;border:1px solid #333;font-size:12px;line-height:17px;color:#000;text-align:center">拼</div>
<div class="abs" style="left:1886px;top:802px;width:12px;height:1px;background:#c3c5ca"></div>
<div class="abs" style="left:1886px;top:841px;width:12px;height:1px;background:#c3c5ca"></div>
<svg class="abs" style="left:1892px;top:863px" width="5" height="8" viewBox="0 0 5 8"><path d="M2.5 0 L5 3.2 H3.2 V8 H1.8 V3.2 H0Z" fill="#2a9df4"/></svg>
<svg class="abs" style="left:1892px;top:889px" width="5" height="8" viewBox="0 0 5 8"><path d="M2.5 8 L5 4.8 H3.2 V0 H1.8 V4.8 H0Z" fill="#1fb35c"/></svg>
<div class="abs" style="left:1896px;top:851px;width:4px;height:7px;border-radius:3px 0 0 3px;background:#fff"></div>
<div class="abs" style="left:1896px;top:877px;width:4px;height:7px;border-radius:3px 0 0 3px;background:#fff"></div>
<div class="abs" style="left:1900px;top:899px;font-size:7px;line-height:7px;color:#1a3c8a;font-weight:bold">uO</div>
</body></html>
